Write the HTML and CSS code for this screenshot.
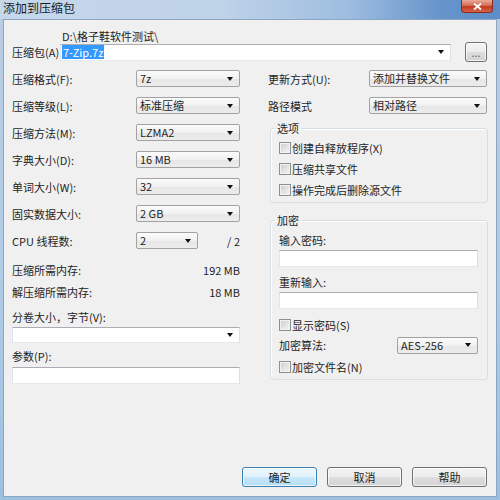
FILE: index.html
```html
<!DOCTYPE html>
<html lang="zh">
<head>
    <meta charset="UTF-8">
    <title>添加到压缩包</title>
    <link rel="stylesheet" href="styles.css">
</head>
<body>
    <div class="window">
        <div class="titlebar">
            <span class="title">添加到压缩包</span>
            <span class="close">
                <svg width="9" height="7" viewBox="0 0 9 7"><path d="M1 0.5 L8 6.5 M8 0.5 L1 6.5" stroke="#fff" stroke-width="1.8"/></svg>
            </span>
        </div>

        <div class="client">
            <div class="archive">
                <div class="archive-path">D:\格子鞋软件测试\</div>
                <span class="archive-label">压缩包(A)</span>
                <div class="combo edit"><span class="selected">7-Zip.7z</span><i class="arrow"></i></div>
                <button class="btn browse">...</button>
            </div>

            <div class="columns">
                <div class="col-left">
                    <div class="form-grid">
                        <span>压缩格式(F):</span>
                        <div class="combo">7z<i class="arrow"></i></div>
                        <span>压缩等级(L):</span>
                        <div class="combo">标准压缩<i class="arrow"></i></div>
                        <span>压缩方法(M):</span>
                        <div class="combo">LZMA2<i class="arrow"></i></div>
                        <span>字典大小(D):</span>
                        <div class="combo">16 MB<i class="arrow"></i></div>
                        <span>单词大小(W):</span>
                        <div class="combo">32<i class="arrow"></i></div>
                        <span>固实数据大小:</span>
                        <div class="combo">2 GB<i class="arrow"></i></div>
                        <span>CPU 线程数:</span>
                        <div class="cpu">
                            <div class="combo small">2<i class="arrow"></i></div>
                            <span>/ 2</span>
                        </div>
                    </div>

                    <div class="mem first"><span>压缩所需内存:</span><span>192 MB</span></div>
                    <div class="mem"><span>解压缩所需内存:</span><span>18 MB</span></div>

                    <div class="field-label volume-label">分卷大小，字节(V):</div>
                    <div class="combo edit volume"><i class="arrow"></i></div>
                    <div class="field-label params-label">参数(P):</div>
                    <div class="input params"></div>
                </div>

                <div class="col-right">
                    <div class="form-grid right">
                        <span>更新方式(U):</span>
                        <div class="combo">添加并替换文件<i class="arrow"></i></div>
                        <span>路径模式</span>
                        <div class="combo">相对路径<i class="arrow"></i></div>
                    </div>

                    <fieldset class="group options">
                        <legend>选项</legend>
                        <label class="check first"><i class="box"></i>创建自释放程序(X)</label>
                        <label class="check"><i class="box"></i>压缩共享文件</label>
                        <label class="check"><i class="box"></i>操作完成后删除源文件</label>
                    </fieldset>

                    <fieldset class="group encrypt">
                        <legend>加密</legend>
                        <div class="field-label pw-label">输入密码:</div>
                        <div class="input pw"></div>
                        <div class="field-label pw-label again">重新输入:</div>
                        <div class="input pw"></div>
                        <label class="check show-pw"><i class="box"></i>显示密码(S)</label>
                        <div class="algo">
                            <span>加密算法:</span>
                            <div class="combo">AES-256<i class="arrow"></i></div>
                        </div>
                        <label class="check names"><i class="box"></i>加密文件名(N)</label>
                    </fieldset>
                </div>
            </div>

            <div class="buttons">
                <button class="btn default">确定</button>
                <button class="btn">取消</button>
                <button class="btn">帮助</button>
            </div>
        </div>
    </div>
</body>
</html>
```

FILE: styles.css
```css
body {
    margin: 0;
    font-family: "Noto Sans CJK SC", "Noto Sans", sans-serif;
    font-size: 11px;
    color: #1e1e1e;
}
.window {
    width: 500px;
    height: 500px;
    display: flex;
    flex-direction: column;
    overflow: hidden;
    background: linear-gradient(#b9cde3, #aecbe6 60%, #9cc0e0);
}
.titlebar {
    height: 19px;
    flex: none;
    display: flex;
    align-items: flex-start;
    background: linear-gradient(to right, #c6d7ea 0%, #bed2e8 45%, #9dbde0 70%, #6794cb 88%, #5d8dc8 100%);
}
.title {
    margin: 1px 0 0 3px;
    font-size: 12px;
    line-height: 14px;
    color: #1b1b1b;
}
.close {
    margin-left: auto;
    margin-right: 7px;
    width: 32px;
    height: 13px;
    box-sizing: border-box;
    border: 1px solid #8a2c1e;
    border-top: none;
    border-radius: 0 0 4px 4px;
    background: linear-gradient(#e9a999 0%, #d66c55 45%, #c2391f 55%, #d5664b 100%);
    display: flex;
    align-items: center;
    justify-content: center;
}
.client {
    flex: 1;
    margin: 0 3px 3px;
    border: 1px solid #8ca6c2;
    background: #f0f0f0;
    padding: 0 8px 9px;
    display: flex;
    flex-direction: column;
}

/* archive row */
.archive {
    margin-top: 10px;
    display: grid;
    grid-template-columns: 48px 391px 36px;
    align-items: center;
}
.archive-label {
    white-space: nowrap;
}
.archive-path {
    grid-column: 2 / 4;
    padding-left: 2px;
    line-height: 12px;
    height: 12px;
}
.archive .combo {
    height: 17px;
    padding-left: 1px;
}
.selected {
    background: #3399ff;
    color: #fff;
    line-height: 14px;
    padding: 0 1px;
}
.btn.browse {
    justify-self: end;
    width: 22px;
    height: 20px;
    color: #666;
    line-height: 14px;
}

/* combos and inputs */
.combo {
    height: 17px;
    box-sizing: border-box;
    border: 1px solid #a2a2a2;
    border-radius: 2px;
    background: linear-gradient(#fbfbfb, #f1f1f1 50%, #e6e6e6 51%, #ececec);
    display: flex;
    align-items: center;
    padding-left: 3px;
    line-height: 15px;
    white-space: nowrap;
}
.combo.edit {
    background: #fff;
    border-radius: 0;
    border-color: #abadb3 #dbdfe6 #e3e9ef #e2e3ea;
}
.arrow {
    margin-left: auto;
    margin-right: 6px;
    width: 0;
    height: 0;
    border-left: 3.5px solid transparent;
    border-right: 3.5px solid transparent;
    border-top: 4px solid #111;
}
.input {
    height: 17px;
    box-sizing: border-box;
    background: #fff;
    border: 1px solid;
    border-color: #abadb3 #dbdfe6 #e3e9ef #e2e3ea;
}

/* columns */
.columns {
    display: flex;
    margin-top: 8px;
}
.col-left {
    width: 228px;
}
.col-right {
    width: 220px;
    margin-left: 28px;
}
.form-grid {
    display: grid;
    grid-template-columns: 124px 104px;
    grid-auto-rows: 17px;
    row-gap: 10px;
    align-items: center;
}
.form-grid.right {
    grid-template-columns: 101px 118px;
}
.cpu {
    display: flex;
    align-items: center;
    justify-content: space-between;
}
.combo.small {
    width: 62px;
}
.mem {
    height: 22px;
    display: flex;
    align-items: center;
    justify-content: space-between;
}
.mem.first {
    margin-top: 10px;
}
.field-label {
    line-height: 14px;
}
.volume-label {
    margin-top: 7px;
}
.combo.volume {
    margin-top: 3px;
    height: 16px;
}
.params-label {
    margin-top: 6px;
}
.params {
    margin-top: 4px;
}

/* group boxes */
.group {
    margin: 7px 0 0 2px;
    padding: 0 9px 2px 8px;
    border: 1px solid #d5dfe5;
    border-radius: 3px;
    box-shadow: inset 1px 1px #fff;
    min-width: 0;
}
.group legend {
    padding: 0 2px;
    margin-left: -4px;
    line-height: 14px;
}
.group.encrypt {
    margin-top: 10px;
}
.check {
    display: flex;
    align-items: center;
    height: 21px;
}
.check.first {
    margin-top: 2px;
}
.box {
    width: 12px;
    height: 12px;
    box-sizing: border-box;
    margin-right: 1px;
    border: 1px solid #8e8f8f;
    background: linear-gradient(135deg, #c9cdd3, #f6f6f6);
    box-shadow: inset 0 0 0 1px #f2f2f2;
}
.pw-label {
    margin-top: 6px;
}
.pw-label.again {
    margin-top: 8px;
}
.pw {
    margin-top: 3px;
}
.show-pw {
    margin-top: 5px;
}
.algo {
    height: 20px;
    display: flex;
    align-items: center;
    justify-content: space-between;
}
.algo .combo {
    width: 81px;
}
.names {
    margin-top: 1px;
}

/* buttons */
.buttons {
    margin-top: auto;
    margin-right: 1px;
    display: flex;
    justify-content: flex-end;
    gap: 10px;
}
.btn {
    width: 75px;
    height: 20px;
    padding: 0;
    font: inherit;
    color: #1e1e1e;
    line-height: 18px;
    border: 1px solid #707070;
    border-radius: 3px;
    background: linear-gradient(#f4f4f4 0%, #ececec 49%, #dedede 50%, #d3d3d3 100%);
    box-shadow: inset 0 0 0 1px rgba(255, 255, 255, 0.7);
}
.btn.default {
    border-color: #3c7fb1;
    background: linear-gradient(#eef7fd 0%, #e0f1fb 49%, #c9e8f9 50%, #b6ddf3 100%);
}
```
